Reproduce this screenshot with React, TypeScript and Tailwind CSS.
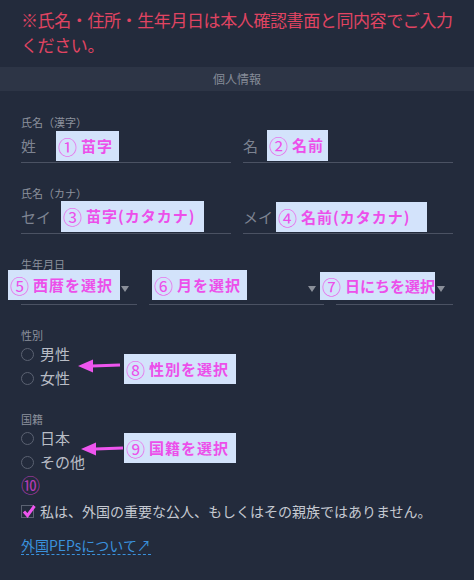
import React from "react";

const FONT = { fontFamily: '"Noto Sans CJK JP", "Noto Sans", sans-serif' };

// magenta note boxes laid over the form (annotations)
const Note = ({ num, text, className, tight }: { num: string; text: string; className: string; tight?: boolean }) => (
  <div
    className={
      "absolute flex items-center whitespace-nowrap bg-[#d3e3fb] pl-[2px] text-[15px] font-bold text-[#ec4fea] " +
      (tight ? "tracking-[0px] " : "tracking-[1px] ") +
      className
    }
  >
    <span className="mr-[4px] text-[19px] leading-none font-normal tracking-normal">{num}</span>
    {text}
  </div>
);

const Label = ({ children, className = "" }: { children: React.ReactNode; className?: string }) => (
  <div className={"text-[11px] leading-[14px] text-[#8c919c] " + className}>{children}</div>
);

const TextField = ({ placeholder, num, note, noteClass }: { placeholder: string; num: string; note: string; noteClass: string }) => (
  <div className="relative flex h-[33px] items-center border-b border-[#4b5263] text-[15px] text-[#7d8391]">
    {placeholder}
    <Note num={num} text={note} className={noteClass} />
  </div>
);

const SelectField = ({ num, note, noteClass, tight }: { num: string; note: string; noteClass: string; tight?: boolean }) => (
  <div className="relative flex h-[34px] items-center justify-end border-b border-[#4b5263] pr-[8px]">
    <svg width="8" height="6" viewBox="0 0 8 6" className="mt-[2px]">
      <path d="M0 0 L8 0 L4 6 Z" fill="#8a8f99" />
    </svg>
    <Note num={num} text={note} className={noteClass} tight={tight} />
  </div>
);

const Radio = ({ label }: { label: string }) => (
  <div className="flex h-6 items-center gap-[6px] text-[15px] text-[#b9bdc6]">
    <span className="h-[13px] w-[13px] rounded-full border border-[#5b6272]" />
    {label}
  </div>
);

const Arrow = ({ className }: { className: string }) => (
  <svg width="44" height="16" viewBox="0 0 44 16" className={"absolute " + className}>
    <path d="M14 8 L42 7" stroke="#ee55ee" strokeWidth="3" />
    <path d="M0 8 L15 1.5 L15 14.5 Z" fill="#ee55ee" />
  </svg>
);

export default function App() {
  return (
    <div className="min-h-[580px] w-[474px] bg-[#232b3c] pb-6" style={FONT}>
      <p className="pl-[21px] pr-[6px] pt-[7px] text-[17px] leading-[25px] tracking-[-0.4px] text-[#e04462]">
        ※氏名・住所・生年月日は本人確認書面と同内容でご入力ください。
      </p>

      <div className="mt-[10px] flex h-6 items-center justify-center bg-[#2d3546] text-[12px] text-[#868c98]">
        個人情報
      </div>

      <div className="px-[21px]">
        <Label className="mt-[24px]">氏名（漢字）</Label>
        <div className="mt-[1px] grid grid-cols-2 gap-3">
          <TextField placeholder="姓" num="①" note="苗字" noteClass="left-[35px] top-[1px] h-[30px] w-[63px]" />
          <TextField placeholder="名" num="②" note="名前" noteClass="left-[24px] top-0 h-[31px] w-[61px]" />
        </div>

        <Label className="mt-[23px]">氏名（カナ）</Label>
        <div className="mt-[1px] grid grid-cols-2 gap-3">
          <TextField placeholder="セイ" num="③" note="苗字(カタカナ)" noteClass="left-[40px] top-0 h-[31px] w-[143px]" />
          <TextField placeholder="メイ" num="④" note="名前(カタカナ)" noteClass="left-[33px] top-[1px] h-[30px] w-[151px]" />
        </div>

        <Label className="mt-[23px]">生年月日</Label>
        <div className="grid grid-cols-[116px_1fr_117px] gap-3">
          <SelectField num="⑤" note="西暦を選択" noteClass="left-[-13px] top-[-1px] h-[30px] w-[112px]" />
          <SelectField num="⑥" note="月を選択" noteClass="left-[3px] top-[-1px] h-[30px] w-[95px]" />
          <SelectField num="⑦" note="日にちを選択" noteClass="left-[-16px] top-[1px] h-[28px] w-[115px]" tight />
        </div>

        <Label className="mt-[23px]">性別</Label>
        <div className="relative">
          <Radio label="男性" />
          <Radio label="女性" />
          <Arrow className="left-[57px] top-[16px]" />
          <Note num="⑧" text="性別を選択" className="left-[103px] top-[12px] h-[30px] w-[112px]" />
        </div>

        <Label className="mt-[22px]">国籍</Label>
        <div className="relative">
          <Radio label="日本" />
          <Radio label="その他" />
          <Arrow className="left-[60px] top-[15px]" />
          <Note num="⑨" text="国籍を選択" className="left-[103px] top-[7px] h-[30px] w-[112px]" />
        </div>

        <div className="mt-[2px] text-[19px] leading-[18px] text-[#b33bb3]">⑩</div>

        <div className="mt-[7px] flex items-center gap-[6px] text-[14px] text-[#c5c9d1]">
          <span className="relative h-[13px] w-[13px] border border-[#5b6272]">
            <svg width="14" height="14" viewBox="0 0 14 14" className="absolute left-[0px] top-[-2px]">
              <path d="M2 7.5 L5.5 11.5 L12.5 2" stroke="#ee55ee" strokeWidth="3" fill="none" />
            </svg>
          </span>
          私は、外国の重要な公人、もしくはその親族ではありません。
        </div>

        <a className="mt-[14px] inline-block border-b border-dashed border-[#3a91dc] text-[14px] leading-[18px] text-[#3a91dc]">
          外国PEPsについて↗
        </a>
      </div>
    </div>
  );
}
